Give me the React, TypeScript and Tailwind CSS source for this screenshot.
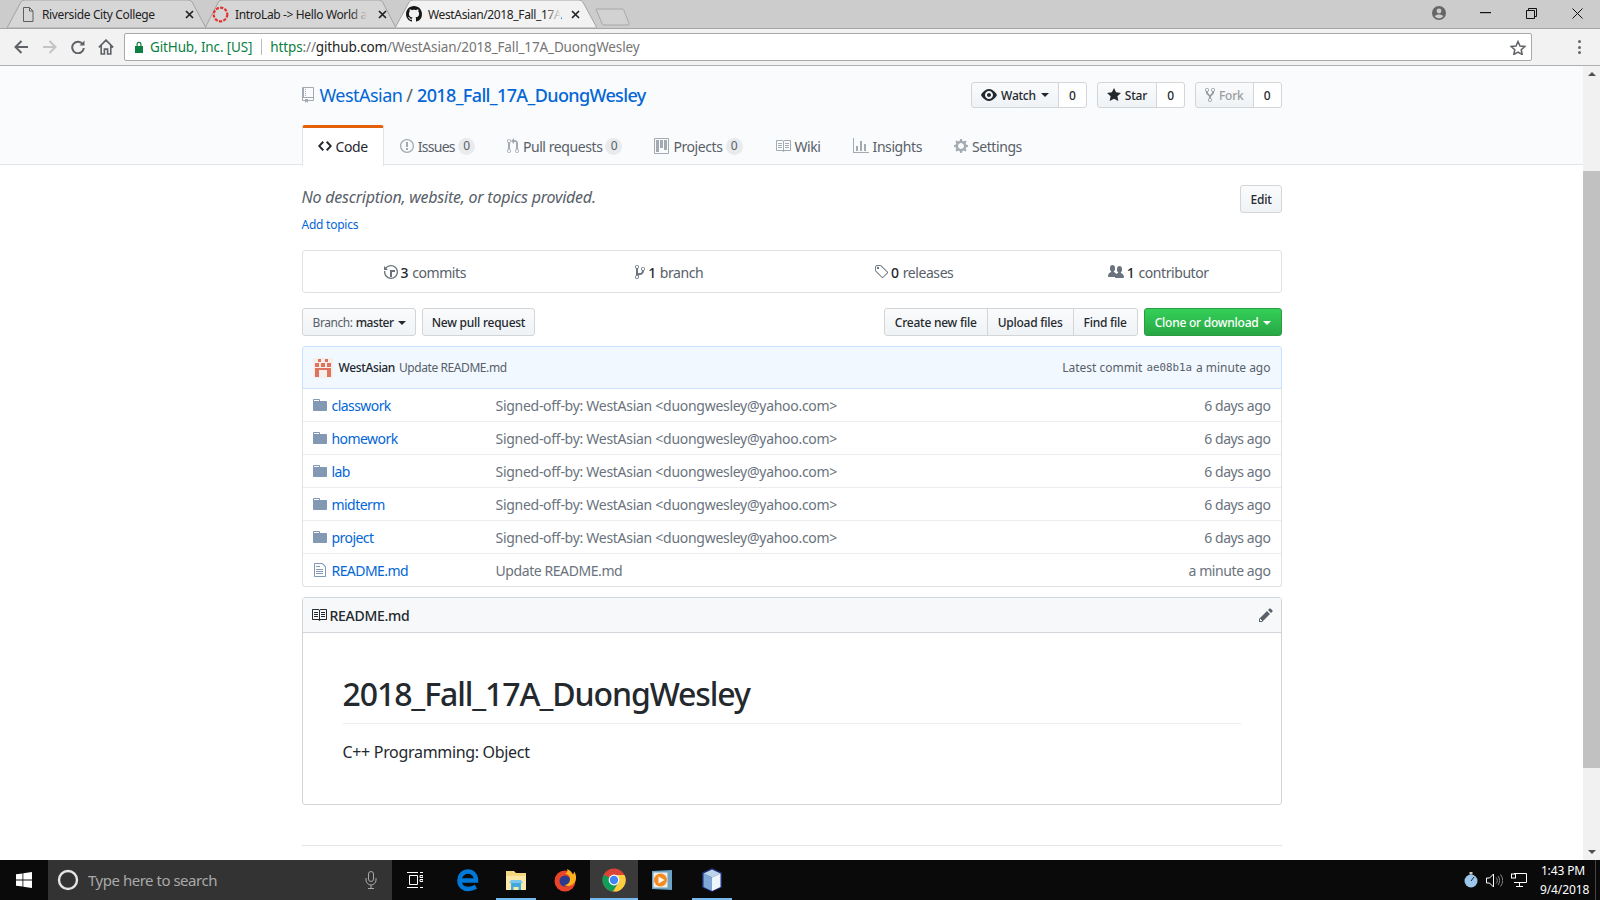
import type { ReactNode } from 'react';

const paths = {
  repo: 'M4 9H3V8h1v1zm0-3H3v1h1V6zm0-2H3v1h1V4zm0-2H3v1h1V2zm8-1v12c0 .55-.45 1-1 1H6v2l-1.5-1.5L3 16v-2H1c-.55 0-1-.45-1-1V1c0-.55.45-1 1-1h10c.55 0 1 .45 1 1zm-1 10H1v2h2v-1h3v1h5v-2zm0-10H2v9h9V1z',
  code: 'M9.5 3L8 4.5 11.5 8 8 11.5 9.5 13 14 8 9.5 3zm-5 0L0 8l4.5 5L6 11.5 2.5 8 6 4.5 4.5 3z',
  issue: 'M7 2.3c3.14 0 5.7 2.56 5.7 5.7s-2.56 5.7-5.7 5.7A5.71 5.71 0 0 1 1.3 8c0-3.14 2.56-5.7 5.7-5.7zM7 1C3.14 1 0 4.14 0 8s3.14 7 7 7 7-3.14 7-7-3.14-7-7-7zm1 3H6v5h2V4zm0 6H6v2h2v-2z',
  pull: 'M11 11.28V5c-.03-.78-.34-1.47-.94-2.06C9.46 2.35 8.78 2.03 8 2H7V0L4 3l3 3V4h1c.27.02.48.11.69.31.21.2.3.42.31.69v6.28A1.993 1.993 0 0 0 10 15a1.993 1.993 0 0 0 1-3.72zm-1 2.92c-.66 0-1.2-.55-1.2-1.2 0-.65.55-1.2 1.2-1.2.65 0 1.2.55 1.2 1.2 0 .65-.55 1.2-1.2 1.2zM4 3c0-1.11-.89-2-2-2a1.993 1.993 0 0 0-1 3.72v6.56A1.993 1.993 0 0 0 2 15a1.993 1.993 0 0 0 1-3.72V4.72c.59-.34 1-.98 1-1.72zm-.8 10c0 .66-.55 1.2-1.2 1.2-.65 0-1.2-.55-1.2-1.2 0-.65.55-1.2 1.2-1.2.65 0 1.2.55 1.2 1.2zM2 4.2C1.34 4.2.8 3.65.8 3c0-.65.55-1.2 1.2-1.2.65 0 1.2.55 1.2 1.2 0 .65-.55 1.2-1.2 1.2z',
  project: 'M10 12h3V2h-3v10zm-4-2h3V2H6v8zm-4 4h3V2H2v12zm-1 1h13V1H1v14zM14 0H1a1 1 0 0 0-1 1v14a1 1 0 0 0 1 1h13a1 1 0 0 0 1-1V1a1 1 0 0 0-1-1z',
  book: 'M3 5h4v1H3V5zm0 3h4V7H3v1zm0 2h4V9H3v1zm11-5h-4v1h4V5zm0 2h-4v1h4V7zm0 2h-4v1h4V9zm2-6v9c0 .55-.45 1-1 1H9.5l-1 1-1-1H2c-.55 0-1-.45-1-1V3c0-.55.45-1 1-1h5.5l1 1 1-1H15c.55 0 1 .45 1 1zm-8 .5L7.5 3H2v9h6V3.5zm7-.5H9.5l-.5.5V12h6V3z',
  graph: 'M16 14v1H0V0h1v14h15zM5 13H3V8h2v5zm4 0H7V3h2v10zm4 0h-2V6h2v7z',
  gear: 'M14 8.77v-1.6l-1.94-.64-.45-1.09.88-1.84-1.13-1.13-1.81.91-1.09-.45-.69-1.92h-1.6l-.63 1.94-1.11.45-1.84-.88-1.13 1.13.91 1.81-.45 1.09L0 7.23v1.59l1.94.64.45 1.09-.88 1.84 1.13 1.13 1.81-.91 1.09.45.69 1.92h1.59l.63-1.94 1.11-.45 1.84.88 1.13-1.13-.92-1.81.47-1.09L14 8.75v.02zM7 11c-1.66 0-3-1.34-3-3s1.34-3 3-3 3 1.34 3 3-1.34 3-3 3z',
  eye: 'M8.06 2C3 2 0 8 0 8s3 6 8.06 6C13 14 16 8 16 8s-3-6-7.94-6zM8 12c-2.2 0-4-1.78-4-4 0-2.2 1.8-4 4-4 2.22 0 4 1.8 4 4 0 2.22-1.78 4-4 4zm2-4c0 1.11-.89 2-2 2-1.11 0-2-.89-2-2 0-1.11.89-2 2-2 1.11 0 2 .89 2 2z',
  star: 'M14 6l-4.9-.64L7 1 4.9 5.36 0 6l3.6 3.26L2.67 14 7 11.67 11.33 14l-.93-4.74L14 6z',
  fork: 'M8 1a1.993 1.993 0 0 0-1 3.72V6L5 8 3 6V4.72A1.993 1.993 0 0 0 2 1a1.993 1.993 0 0 0-1 3.72V6.5l3 3v1.78A1.993 1.993 0 0 0 5 15a1.993 1.993 0 0 0 1-3.72V9.5l3-3V4.72A1.993 1.993 0 0 0 8 1zM2 4.2C1.34 4.2.8 3.65.8 3c0-.65.55-1.2 1.2-1.2.65 0 1.2.55 1.2 1.2 0 .65-.55 1.2-1.2 1.2zm3 10c-.66 0-1.2-.55-1.2-1.2 0-.65.55-1.2 1.2-1.2.65 0 1.2.55 1.2 1.2 0 .65-.55 1.2-1.2 1.2zm3-10c-.66 0-1.2-.55-1.2-1.2 0-.65.55-1.2 1.2-1.2.65 0 1.2.55 1.2 1.2 0 .65-.55 1.2-1.2 1.2z',
  history: 'M8 13H6V6h5v2H8v5zM7 1C4.81 1 2.87 2.02 1.59 3.59L0 2v4h4L2.5 4.5C3.55 3.17 5.17 2.3 7 2.3c3.14 0 5.7 2.56 5.7 5.7s-2.56 5.7-5.7 5.7A5.71 5.71 0 0 1 1.3 8c0-.34.03-.67.09-1H.08C.03 7.33 0 7.66 0 8c0 3.86 3.14 7 7 7s7-3.14 7-7-3.14-7-7-7z',
  branch: 'M10 5c0-1.11-.89-2-2-2a1.993 1.993 0 0 0-1 3.72v.3c-.02.52-.23.98-.63 1.38-.4.4-.86.61-1.38.63-.83.02-1.48.16-2 .45V4.72a1.993 1.993 0 0 0-1-3.72C.88 1 0 1.89 0 3a2 2 0 0 0 1 1.72v6.56c-.59.35-1 .99-1 1.72 0 1.11.89 2 2 2 1.11 0 2-.89 2-2 0-.53-.2-1-.53-1.36.09-.06.48-.41.59-.47.25-.11.56-.17.94-.17 1.05-.05 1.95-.45 2.75-1.25S8.95 7.77 9 6.73h-.02C9.59 6.37 10 5.73 10 5zM2 1.8c.66 0 1.2.55 1.2 1.2 0 .65-.55 1.2-1.2 1.2C1.35 4.2.8 3.65.8 3c0-.65.55-1.2 1.2-1.2zm0 12.41c-.66 0-1.2-.55-1.2-1.2 0-.65.55-1.2 1.2-1.2.65 0 1.2.55 1.2 1.2 0 .65-.55 1.2-1.2 1.2zm6-8c-.66 0-1.2-.55-1.2-1.2 0-.65.55-1.2 1.2-1.2.65 0 1.2.55 1.2 1.2 0 .65-.55 1.2-1.2 1.2z',
  tag: 'M7.73 1.73C7.26 1.26 6.62 1 5.96 1H3.5C2.13 1 1 2.13 1 3.5v2.47c0 .66.27 1.3.73 1.77l6.06 6.06c.39.39 1.02.39 1.41 0l4.59-4.59a.996.996 0 0 0 0-1.41L7.73 1.73zM2.38 7.09c-.31-.3-.47-.7-.47-1.13V3.5c0-.88.72-1.59 1.59-1.59h2.47c.42 0 .83.16 1.13.47l6.14 6.13-4.73 4.73-6.13-6.15zM3.01 3h2v2H3V3h.01z',
  people: 'M16 12.999c0 .439-.45 1-1 1H7.995c-.539 0-.994-.447-.995-.999H1c-.54 0-1-.561-1-1 0-2.634 3-4 3-4s.229-.409 0-1c-.841-.621-1.058-.59-1-3 .058-2.419 1.367-3 2.5-3s2.442.58 2.5 3c.058 2.41-.159 2.379-1 3-.229.59 0 1 0 1s1.549.711 2.42 2.088C9.196 9.369 10 8.999 10 8.999s.229-.409 0-1c-.841-.62-1.058-.59-1-3 .058-2.419 1.367-3 2.5-3s2.437.581 2.495 3c.059 2.41-.158 2.38-1 3-.229.59 0 1 0 1s3.005 1.366 3.005 4z',
  folder: 'M13 4H7V3c0-.66-.31-1-1-1H1c-.55 0-1 .45-1 1v10c0 .55.45 1 1 1h12c.55 0 1-.45 1-1V5c0-.55-.45-1-1-1zM6 4H1V3h5v1z',
  file: 'M6 5H2V4h4v1zM2 8h7V7H2v1zm0 2h7V9H2v1zm0 2h7v-1H2v1zm10-7.5V14c0 .55-.45 1-1 1H1c-.55 0-1-.45-1-1V2c0-.55.45-1 1-1h7.5L12 4.5zM11 5L8 2H1v12h10V5z',
  pencil: 'M0 12v3h3l8-8-3-3-8 8zm3 2H1v-2h1v1h1v1zm10.3-9.3L12 6 9 3l1.3-1.3a.996.996 0 0 1 1.41 0l1.59 1.59c.39.39.39 1.02 0 1.41z',
  github: 'M8 0C3.58 0 0 3.58 0 8c0 3.54 2.29 6.53 5.47 7.59.4.07.55-.17.55-.38 0-.19-.01-.82-.01-1.49-2.01.37-2.53-.49-2.69-.94-.09-.23-.48-.94-.82-1.13-.28-.15-.68-.52-.01-.53.63-.01 1.08.58 1.23.82.72 1.21 1.87.87 2.33.66.07-.52.28-.87.51-1.07-1.78-.2-3.64-.89-3.64-3.95 0-.87.31-1.59.82-2.15-.08-.2-.36-1.02.08-2.12 0 0 .67-.21 2.2.82.64-.18 1.32-.27 2-.27.68 0 1.36.09 2 .27 1.53-1.04 2.2-.82 2.2-.82.44 1.1.16 1.92.08 2.12.51.56.82 1.27.82 2.15 0 3.07-1.87 3.75-3.65 3.95.29.25.54.73.54 1.48 0 1.07-.01 1.93-.01 2.2 0 .21.15.46.55.38A8.013 8.013 0 0 0 16 8c0-4.42-3.58-8-8-8z',
};

const Octicon = ({ d, w, className }: { d: string; w: number; className?: string }) => (
  <svg viewBox={`0 0 ${w} 16`} width={w} height={16} fill="currentColor" className={`shrink-0 ${className ?? ''}`}>
    <path fillRule="evenodd" d={d} />
  </svg>
);

const Caret = ({ className }: { className?: string }) => (
  <span className={`inline-block w-0 h-0 border-x-[4px] border-x-transparent border-t-[4px] ${className ?? ''}`} />
);

const Tab = ({ title, icon, active, layout, fade }: { title: string; icon: ReactNode; active?: boolean; layout: string; fade?: boolean }) => (
  <div className={`relative h-[28px] -mr-[1px] flex items-center ${layout}`}>
    <svg className="absolute inset-0 w-full h-full" viewBox="0 0 100 28" preserveAspectRatio="none">
      <path d="M0 28 L7 2 Q7.500 0 9 0 L91 0 Q92.500 0 93 2 L100 28 Z" fill={active ? '#f2f2f2' : '#d6d6d6'} stroke="#a3a3a3" strokeWidth="1" vectorEffect="non-scaling-stroke" />
    </svg>
    <div className="relative w-[17px] flex justify-center shrink-0">{icon}</div>
    <div className="relative ml-[6px] pt-[2px] flex-1 min-w-0 whitespace-nowrap text-[12px] tracking-[-0.03em] text-[#222]">
      <span className="relative">
        {title}
        {fade && <span className={`absolute right-0 top-0 h-full w-[16px] bg-gradient-to-r from-transparent ${active ? 'to-[#f2f2f2]' : 'to-[#d6d6d6]'}`} />}
      </span>
    </div>
    <svg className="relative shrink-0 ml-[6px]" width="9" height="9" viewBox="0 0 9 9" stroke="#222" strokeWidth="1.700">
      <path d="M1 1l7 7M8 1l-7 7" />
    </svg>
  </div>
);

const TabStrip = () => (
  <div className="h-[29px] bg-[#cccccc] border-b border-[#a6a6a6] flex items-start pl-[7px] shrink-0">
    <Tab
      layout="w-[199px] pl-[12px] pr-[12px]"
      title="Riverside City College"
      icon={
        <svg width="12" height="15" viewBox="0 0 12 15" fill="none" stroke="#5f5f5f">
          <path d="M1.500.5h6l3.500 3.500v10.500h-9.500zM7.500.5V4H11" />
        </svg>
      }
    />
    <Tab
      layout="w-[191px] pl-[7px] pr-[9px]"
      title="IntroLab -> Hello World a"
      fade
      icon={
        <svg width="17" height="17" viewBox="0 0 17 17" fill="none" stroke="#e2332f" strokeWidth="2.200" strokeDasharray="3.200 1.300">
          <circle cx="8.500" cy="8.500" r="6.800" />
        </svg>
      }
    />
    <Tab
      active
      layout="w-[202px] pl-[10px] pr-[17px]"
      title="WestAsian/2018_Fall_17A"
      fade
      icon={<Octicon d={paths.github} w={16} className="text-[#161614]" />}
    />
    <svg width="36" height="18" viewBox="0 0 36 18" className="-ml-[1px] mt-[8px]" fill="#d2d2d2" stroke="#a8a8a8">
      <path d="M1 1h26q1.500 0 2 1.500l5 13q.5 1.500-1 1.500H9q-1.500 0-2-1.500L1 1z" />
    </svg>
    <div className="flex-1" />
    <svg width="16" height="16" viewBox="0 0 16 16" className="mt-[5px] mr-[33px]" fill="#666">
      <path d="M8 1a7 7 0 1 0 0 14A7 7 0 0 0 8 1zm0 2.600a2.400 2.400 0 1 1 0 4.800 2.400 2.400 0 0 1 0-4.800zM8 13.400a5.500 5.500 0 0 1-4.300-2.200c.7-1.200 2.700-1.800 4.300-1.800s3.600.6 4.300 1.800A5.500 5.500 0 0 1 8 13.400z" />
    </svg>
    <svg width="11" height="2" viewBox="0 0 11 2" className="mt-[12px] mr-[35px]" fill="#111">
      <rect width="11" height="1.200" />
    </svg>
    <svg width="11" height="11" viewBox="0 0 11 11" className="mt-[8px] mr-[35px]" fill="none" stroke="#111">
      <path d="M.5 2.500h8v8h-8zM2.500 2.500v-2h8v8h-2" />
    </svg>
    <svg width="11" height="11" viewBox="0 0 11 11" className="mt-[8px] mr-[17px]" fill="none" stroke="#111">
      <path d="M.5.500l10 10M10.500.500l-10 10" />
    </svg>
  </div>
);

const Toolbar = () => (
  <div className="h-[37px] bg-[#f2f2f2] border-b border-[#b0b0b0] flex items-center shrink-0 pl-[14px]">
    <svg width="14" height="14" viewBox="0 0 14 14" fill="none" stroke="#5f6368" strokeWidth="2">
      <path d="M14 7H1.500M7.500 1l-6 6 6 6" />
    </svg>
    <svg width="14" height="14" viewBox="0 0 14 14" fill="none" stroke="#c4c4c4" strokeWidth="2" className="ml-[15px]">
      <path d="M0 7h12.500M6.500 1l6 6-6 6" />
    </svg>
    <svg width="14" height="14" viewBox="0 0 14 14" fill="none" stroke="#5f6368" strokeWidth="2" className="ml-[14px]">
      <path d="M12 4.500A5.800 5.800 0 1 0 12.800 8" />
      <path d="M13.500.5v5h-5z" fill="#5f6368" stroke="none" />
    </svg>
    <svg width="16" height="16" viewBox="0 0 15 15" fill="none" stroke="#5f6368" strokeWidth="1.500" className="ml-[13px]">
      <path d="M.8 7.800L7.500 1l6.700 6.800M3 6v8h3V9.500h3V14h3V6" />
    </svg>
    <div className="ml-[10px] w-[1408px] h-[28px] bg-white border border-[#a9a9a9] rounded-[2px] flex items-center pl-[9px] pr-[5px] text-[13.500px] tracking-[-0.01em]">
      <svg width="10" height="12" viewBox="0 0 10 12" fill="#0b8043">
        <path d="M1 5h8v7H1zM2.500 5V3.200a2.500 2.500 0 0 1 5 0V5H6.300V3.300a1.300 1.300 0 0 0-2.600 0V5z" />
      </svg>
      <span className="ml-[6px] text-[#0b8043] whitespace-nowrap">GitHub, Inc. [US]</span>
      <span className="ml-[9px] w-px h-[16px] bg-[#bbb]" />
      <span className="ml-[8px] whitespace-nowrap text-[#757575]">
        <span className="text-[#0b8043]">https</span>://<span className="text-[#222]">github.com</span>/WestAsian/2018_Fall_17A_DuongWesley
      </span>
      <svg width="16" height="15" viewBox="0 0 16 15" fill="none" stroke="#5f6368" strokeWidth="1.500" className="ml-auto">
        <path d="M8 1.500l2 4.500 4.800.5-3.600 3.200 1 4.800L8 12l-4.200 2.500 1-4.800L1.200 6.500 6 6z" />
      </svg>
    </div>
    <div className="ml-[46px] flex flex-col gap-[2.500px]">
      <span className="w-[3px] h-[3px] rounded-full bg-[#666]" />
      <span className="w-[3px] h-[3px] rounded-full bg-[#666]" />
      <span className="w-[3px] h-[3px] rounded-full bg-[#666]" />
    </div>
  </div>
);

const HeadButton = ({ d, w, label, count, caret, disabled }: { d: string; w: number; label: string; count: string; caret?: boolean; disabled?: boolean }) => (
  <div className="flex h-[26px] text-[12px] font-medium tracking-[-0.02em] text-[#24292e]">
    <div className={`flex items-center gap-[3px] px-[9px] border border-[#d4d5d7] rounded-l-[3px] bg-gradient-to-b from-[#fafbfc] to-[#eff3f6] ${disabled ? 'text-[#9a9da0]' : ''}`}>
      <Octicon d={d} w={w} />
      <span className="ml-[1px] pt-[1px]">{label}</span>
      {caret && <Caret className="ml-[2px] border-t-[#24292e]" />}
    </div>
    <div className="flex items-center justify-center pt-[1px] w-[29px] -ml-px bg-white border border-[#d4d5d7] rounded-r-[3px]">{count}</div>
  </div>
);

const NavItem = ({ d, w, label, count, labelClass }: { d: string; w: number; label: string; count?: string; labelClass?: string }) => (
  <div className="flex items-center h-[41px] pt-[1px] px-[16px] text-[#586069] text-[14px] tracking-[-0.03em] whitespace-nowrap">
    <Octicon d={d} w={w} className="text-[#a3aab1] mr-[4px]" />
    <span className={labelClass}>{label}</span>
    {count && <span className="ml-[3px] w-[17px] h-[17px] rounded-full bg-[#e8eaec] text-[12px] flex items-center justify-center">{count}</span>}
  </div>
);

const RepoHead = () => (
  <div className="bg-[#fafbfc] border-b border-[#e1e4e8] h-[99px]">
    <div className="w-[980px] mx-auto">
      <div className="flex items-start justify-between pt-[16px] h-[59px]">
        <div className="flex items-center text-[18px] leading-[26px] text-[#586069]">
          <Octicon d={paths.repo} w={12} className="text-[#a3aab1] mr-[6px]" />
          <span className="text-[#0366d6] tracking-[-0.03em]">WestAsian</span>
          <span className="mx-[4px]">/</span>
          <span className="text-[#0366d6] font-medium tracking-[-0.035em]">2018_Fall_17A_DuongWesley</span>
        </div>
        <div className="flex gap-[10px]">
          <HeadButton d={paths.eye} w={16} label="Watch" count="0" caret />
          <HeadButton d={paths.star} w={14} label="Star" count="0" />
          <HeadButton d={paths.fork} w={10} label="Fork" count="0" disabled />
        </div>
      </div>
      <div className="flex">
        <div className="relative z-10 flex items-center gap-[4px] h-[41px] pb-[2px] px-[15px] bg-white border-x border-[#e1e4e8] border-t-[3px] border-t-[#e36209] rounded-t-[3px] text-[14px] tracking-[-0.03em] text-[#24292e]">
          <Octicon d={paths.code} w={14} />
          <span>Code</span>
        </div>
        <NavItem d={paths.issue} w={14} label="Issues" count="0" labelClass="tracking-[-0.05em]" />
        <NavItem d={paths.pull} w={12} label="Pull requests" count="0" />
        <NavItem d={paths.project} w={15} label="Projects" count="0" />
        <NavItem d={paths.book} w={16} label="Wiki" />
        <NavItem d={paths.graph} w={16} label="Insights" />
        <NavItem d={paths.gear} w={14} label="Settings" />
      </div>
    </div>
  </div>
);

const Stat = ({ d, w, num, label }: { d: string; w: number; num: string; label: string }) => (
  <div className="flex-1 flex items-center justify-center pt-[1px] text-[14px] tracking-[-0.03em] text-[#586069]">
    <Octicon d={d} w={w} className="text-[#6a737d] mr-[3px]" />
    <span className="font-medium text-[#24292e] mr-[4px]">{num}</span>
    <span>{label}</span>
  </div>
);

const Btn = ({ children, className }: { children: ReactNode; className?: string }) => (
  <div className={`h-[28px] pt-[1px] flex items-center whitespace-nowrap text-[12px] font-medium tracking-[-0.02em] text-[#24292e] border border-[#d4d5d7] bg-gradient-to-b from-[#fafbfc] to-[#eff3f6] ${className ?? ''}`}>
    {children}
  </div>
);

const files = [
  { name: 'classwork', message: 'Signed-off-by: WestAsian <duongwesley@yahoo.com>', age: '6 days ago' },
  { name: 'homework', message: 'Signed-off-by: WestAsian <duongwesley@yahoo.com>', age: '6 days ago' },
  { name: 'lab', message: 'Signed-off-by: WestAsian <duongwesley@yahoo.com>', age: '6 days ago' },
  { name: 'midterm', message: 'Signed-off-by: WestAsian <duongwesley@yahoo.com>', age: '6 days ago' },
  { name: 'project', message: 'Signed-off-by: WestAsian <duongwesley@yahoo.com>', age: '6 days ago' },
  { name: 'README.md', message: 'Update README.md', age: 'a minute ago', isFile: true },
];

const RepoBody = () => (
  <div className="w-[980px] mx-auto">
    <div className="flex items-start justify-between h-[85px] pt-[20px]">
      <div>
        <div className="-mt-[1px] text-[16px] leading-[26px] italic tracking-[-0.015em] text-[#586069]">No description, website, or topics provided.</div>
        <div className="mt-[6px] text-[12px] leading-[18px] tracking-[-0.02em] text-[#0366d6]">Add topics</div>
      </div>
      <Btn className="rounded-[3px] px-[9px]">Edit</Btn>
    </div>

    <div className="h-[43px] flex border border-[#dfe2e5] rounded-[3px]">
      <Stat d={paths.history} w={14} num="3" label="commits" />
      <Stat d={paths.branch} w={10} num="1" label="branch" />
      <Stat d={paths.tag} w={14} num="0" label="releases" />
      <Stat d={paths.people} w={16} num="1" label="contributor" />
    </div>

    <div className="mt-[15px] flex">
      <Btn className="rounded-[3px] pl-[10px] pr-[9px] tracking-[-0.035em]">
        <span className="font-normal text-[#586069]">Branch:</span>
        <span className="ml-[3px]">master</span>
        <Caret className="ml-[4px] border-t-[#24292e]" />
      </Btn>
      <Btn className="rounded-[3px] ml-[6px] px-[9px]">New pull request</Btn>
      <div className="flex-1" />
      <Btn className="rounded-l-[3px] px-[10px]">Create new file</Btn>
      <Btn className="-ml-px px-[10px]">Upload files</Btn>
      <Btn className="-ml-px rounded-r-[3px] px-[10px]">Find file</Btn>
      <div className="ml-[6px] h-[28px] pt-[1px] px-[10px] flex items-center gap-[4px] whitespace-nowrap text-[12px] font-medium tracking-[-0.02em] text-white rounded-[3px] border border-[#2c9a44] bg-gradient-to-b from-[#34d058] to-[#28a745]">
        Clone or download
        <Caret className="border-t-white" />
      </div>
    </div>

    <div className="mt-[10px] h-[43px] flex items-center px-[10px] bg-[#f1f8ff] border border-[#c8e1ff] rounded-t-[3px] text-[12px] text-[#586069]">
      <svg width="20" height="20" viewBox="0 0 20 20" className="mr-[6px] shrink-0">
        <rect width="20" height="20" fill="#f4efed" />
        <g fill="#e0725e">
          <rect x="5" y="1" width="3" height="3" />
          <rect x="12" y="1" width="3" height="3" />
          <rect x="2" y="5" width="4" height="4" />
          <rect x="8" y="5" width="4" height="4" />
          <rect x="14" y="5" width="4" height="4" />
          <rect x="2" y="10" width="16" height="2" />
          <rect x="2" y="12" width="4" height="7" />
          <rect x="14" y="12" width="4" height="7" />
        </g>
      </svg>
      <span className="font-medium text-[#24292e] tracking-[-0.03em]">WestAsian</span>
      <span className="ml-[4px] tracking-[-0.035em]">Update README.md</span>
      <span className="ml-auto">Latest commit</span>
      <span className="ml-[4px] pt-[2px] font-['DejaVu_Sans_Mono',monospace] text-[10.800px]">ae08b1a</span>
      <span className="ml-[4px]">a minute ago</span>
    </div>

    <div className="border-x border-b border-[#dfe2e5] rounded-b-[3px] -mt-px">
      {files.map((f, i) => (
        <div key={f.name} className={`h-[33px] flex items-center px-[10px] text-[14px] ${i === 0 ? 'border-t border-t-[#c8e1ff]' : 'border-t border-[#eaecef]'}`}>
          <div className="w-[16px] flex shrink-0">
            {f.isFile ? (
              <Octicon d={paths.file} w={12} className="text-[#8298b3] ml-[1px]" />
            ) : (
              <Octicon d={paths.folder} w={14} className="text-[#8298b3]" />
            )}
          </div>
          <span className="w-[164px] ml-[3px] tracking-[-0.04em] text-[#0366d6]">{f.name}</span>
          <span className={`text-[#6a737d] ${f.isFile ? 'tracking-[-0.03em]' : 'tracking-[-0.02em]'}`}>{f.message}</span>
          <span className="ml-auto tracking-[-0.03em] text-[#6a737d]">{f.age}</span>
        </div>
      ))}
    </div>

    <div className="mt-[10px] h-[208px] border border-[#d1d5da] rounded-[3px]">
      <div className="h-[35px] flex items-center px-[9px] bg-[#f6f8fa] border-b border-[#d1d5da] text-[14px] font-medium tracking-[-0.02em] text-[#24292e]">
        <Octicon d={paths.book} w={16} className="-ml-[1px] mr-[3px]" />
        README.md
        <Octicon d={paths.pencil} w={14} className="ml-auto text-[#586069] -mr-[1px]" />
      </div>
      <div className="px-[40px] pt-[41px]">
        <div className="h-[50px] border-b border-[#eaecef] text-[32px] leading-[40px] font-medium tracking-[-0.034em] text-[#24292e]">2018_Fall_17A_DuongWesley</div>
        <div className="mt-[16px] text-[16px] leading-[24px] tracking-[-0.02em] text-[#24292e]">C++ Programming: Object</div>
      </div>
    </div>

    <div className="mt-[40px] border-t border-[#e1e4e8]" />
  </div>
);

const Scrollbar = () => (
  <div className="w-[17px] shrink-0 bg-[#f1f1f1] flex flex-col items-center">
    <Caret className="mt-[6px] rotate-180 border-t-[#505050]" />
    <div className="mt-[95px] w-full h-[597px] bg-[#c1c1c1]" />
    <div className="flex-1" />
    <Caret className="mb-[6px] border-t-[#505050]" />
  </div>
);

const Taskbar = () => (
  <div className="h-[40px] bg-[#0a0a0a] flex items-center shrink-0 text-white relative">
    <div className="w-[48px] flex justify-center">
      <svg width="16" height="16" viewBox="0 0 16 16" fill="#fff">
        <path d="M0 2.300l6.500-.9v6.200H0zM7.300 1.300L16 0v7.600H7.300zM0 8.400h6.500v6.200L0 13.700zM7.300 8.400H16V16l-8.700-1.200z" />
      </svg>
    </div>
    <div className="w-[344px] h-full bg-[#333333] flex items-center pl-[9px]">
      <svg width="22" height="22" viewBox="0 0 22 22" fill="none" stroke="#e4e4e4" strokeWidth="2.400">
        <circle cx="11" cy="11" r="9" />
      </svg>
      <span className="ml-[9px] text-[15px] tracking-[-0.032em] text-[#a9a9a9]">Type here to search</span>
      <svg width="12" height="18" viewBox="0 0 12 18" fill="none" stroke="#a9a9a9" className="ml-auto mr-[15px]">
        <rect x="3.500" y=".5" width="5" height="10" rx="2.500" />
        <path d="M1 7v2a5 5 0 0 0 10 0V7M6 14v3M3 17.500h6" />
      </svg>
    </div>
    <svg width="16" height="16" viewBox="0 0 16 16" fill="none" stroke="#fff" className="ml-[15px]">
      <path d="M0 .5h11M13 .5h3M0 15.500h11M13 15.500h3M2.500 3.500h8v9h-8zM13 3.500h3v2h-3zM13 7.500h3v2h-3z" />
    </svg>

    {/* Edge */}
    <svg width="22" height="24" viewBox="0 0 22 24" fill="none" stroke="#0078d7" strokeWidth="4.500" className="ml-[34px]">
      <path d="M3.500 12.500h15.500C19 7 15.500 3.500 11 3.500c-5 0-8.500 4-8.500 9 0 5.500 4 8.500 8.500 8.500 3 0 5.500-.8 8-2.200" />
    </svg>

    {/* Explorer */}
    <div className="ml-[17px] relative w-[40px] h-full flex items-center justify-center">
      <svg width="22" height="22" viewBox="0 0 22 22">
        <path d="M1 2h8l2 2h10v17H1z" fill="#f5d77e" />
        <path d="M1 7h20v14H1z" fill="#fbe9a8" />
        <path d="M6 21v-7h10v7h-2.500v-3h-5v3z" fill="#3fa9e0" />
        <path d="M4 14h14l-2-3H6z" fill="#7cc5ec" />
      </svg>
      <div className="absolute bottom-0 inset-x-0 h-[2px] bg-[#76b9ed]" />
    </div>

    {/* Firefox */}
    <svg width="24" height="24" viewBox="0 0 24 24" className="ml-[17px]">
      <circle cx="12" cy="13" r="10.500" fill="#e8442a" />
      <circle cx="12" cy="13" r="5.500" fill="#2b3a8c" />
      <path d="M14 1c1 2 0 4-2 5 3 0 5 2 5 5 0 4-3 6-6 6 5 3 11-.5 12-6 .4-3-.5-6-2-7.500 0 1.500-.5 2.500-1.500 3C19 4 17 2 14 1z" fill="#ffb01f" />
    </svg>

    {/* Chrome */}
    <div className="ml-[13px] relative w-[48px] h-full bg-[#3a3a3a] flex items-center justify-center">
      <svg width="24" height="24" viewBox="0 0 24 24">
        <circle cx="12" cy="12" r="11.500" fill="#db4437" />
        <path d="M12 12L1.800 6.700A11.500 11.500 0 0 0 11 23.500l6-10z" fill="#0f9d58" />
        <path d="M12 7h10.500A11.500 11.500 0 0 1 11 23.500l6-10z" fill="#ffcd40" />
        <circle cx="12" cy="12" r="5.400" fill="#fff" />
        <circle cx="12" cy="12" r="4.200" fill="#4285f4" />
      </svg>
      <div className="absolute bottom-0 inset-x-0 h-[2px] bg-[#76b9ed]" />
    </div>

    {/* media player */}
    <svg width="20" height="22" viewBox="0 0 20 22" className="ml-[14px]">
      <path d="M0 2l20-1v20L0 20z" fill="#6ea3c6" />
      <path d="M1.500 3.500h14v15h-14z" fill="#f0ede6" />
      <circle cx="8.500" cy="11" r="6.500" fill="#f58a1f" />
      <path d="M6.500 7.500l6 3.500-6 3.500z" fill="#fff" />
    </svg>

    {/* cube app */}
    <div className="ml-[20px] relative w-[40px] h-full flex items-center justify-center">
      <svg width="22" height="26" viewBox="0 0 22 26">
        <path d="M11 1l10 4.500v15L11 25 1 20.500v-15z" fill="#1b2a6b" />
        <path d="M11 2.500l8.500 4L11 10.500l-8.500-4z" fill="#bcd3ec" />
        <path d="M11 10.500l8.500-4v13.500L11 24z" fill="#eef5fb" />
        <path d="M2.500 6.500l8.500 4V24l-8.500-4z" fill="#7ea8d6" />
      </svg>
      <div className="absolute bottom-0 inset-x-0 h-[2px] bg-[#76b9ed]" />
    </div>

    <div className="flex-1" />
    <svg width="14" height="16" viewBox="0 0 14 16" className="mr-[8px]">
      <circle cx="7" cy="9" r="6.500" fill="#9cc7ec" />
      <rect x="5.500" y="0" width="3" height="2.500" fill="#ccc" />
      <path d="M7 9l3-4" stroke="#222" strokeWidth="1" />
    </svg>
    <svg width="17" height="15" viewBox="0 0 17 15" fill="none" stroke="#fff" className="mr-[8px]">
      <path d="M.5 5h3l4-4v13l-4-4h-3z" />
      <path d="M10 4.500a4 4 0 0 1 0 6M12 3a7 7 0 0 1 0 9M14.500 1.500a10 10 0 0 1 0 12" stroke="#888" />
    </svg>
    <svg width="16" height="14" viewBox="0 0 16 14" fill="none" stroke="#fff" className="mr-[13px]">
      <path d="M3 .5h12.500v9H3M8.500 9.500v3.500M5 13.500h7" />
      <rect x=".5" y="1" width="4" height="4" />
    </svg>
    <div className="w-[46px] text-center text-[12px] leading-[19px] tracking-[-0.01em] whitespace-nowrap mr-[9px]">
      <div>1:43 PM</div>
      <div>9/4/2018</div>
    </div>
    <div className="w-[5px] h-full border-l border-[#444]" />
  </div>
);

export default function App() {
  return (
    <div className="w-[1600px] h-[900px] flex flex-col overflow-hidden bg-white font-['Noto_Sans',sans-serif]">
      <TabStrip />
      <Toolbar />
      <div className="flex-1 flex min-h-0">
        <div className="flex-1 min-w-0 overflow-hidden">
          <RepoHead />
          <RepoBody />
        </div>
        <Scrollbar />
      </div>
      <Taskbar />
    </div>
  );
}
